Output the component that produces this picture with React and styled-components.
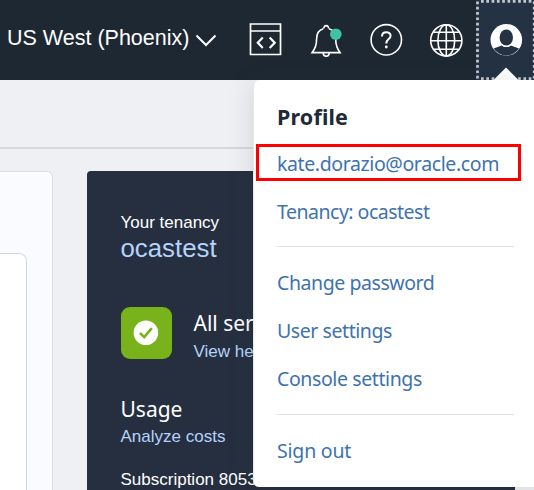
import React from "react";
import styled, { createGlobalStyle } from "styled-components";

const GlobalStyle = createGlobalStyle`
  * { box-sizing: border-box; }
  body { margin: 0; overflow: hidden; font-family: "Liberation Sans", Arial, sans-serif; }
`;

const Page = styled.div`
  position: relative;
  width: 534px;
  height: 490px;
  overflow: hidden;
  display: flex;
  flex-direction: column;
  background: #eff0f4;
`;

const TopBar = styled.header`
  display: flex;
  flex: 0 0 80px;
  width: 536px;
  background: #1e2833;
  color: #fff;
`;

const Region = styled.div`
  display: flex;
  align-items: center;
  width: 236px;
  padding: 0 0 4px 7px;
  font-size: 21.5px;
  white-space: nowrap;

  svg { margin: 6px 0 0 6px; }
`;

const IconButton = styled.div`
  display: flex;
  align-items: center;
  justify-content: center;
  width: 60px;
  height: 80px;
`;

const ProfileButton = styled(IconButton)`
  background: #243244;
  position: relative;
`;

const ProfileFrame = styled.svg`
  position: absolute;
  inset: 0;
`;

const Content = styled.main`
  flex: 1;
  display: flex;
  flex-direction: column;
  min-height: 0;
`;

const Toolbar = styled.div`
  height: 69px;
  flex: none;
  border-bottom: 2px solid #d3d8dc;
`;

const Columns = styled.div`
  display: flex;
  flex: 1;
  padding-top: 22px;
  gap: 34px;
`;

const MainCard = styled.section`
  width: 52.5px;
  height: 340px;
  padding-top: 81px;
  border: 1px solid #dadde2;
  border-left: 0;
  border-top-right-radius: 6px;
  background: #fafbff;
`;

const InnerCard = styled.div`
  width: 27px;
  height: 260px;
  border: 1px solid #d3d8df;
  border-left: 0;
  border-top-right-radius: 8px;
  background: #fff;
`;

const TenancyCard = styled.section`
  width: 428px;
  height: 340px;
  padding: 42px 0 0 34px;
  border-top-left-radius: 4px;
  background: #252f3f;
  color: #fff;
  white-space: nowrap;
`;

const Label = styled.div`
  font-size: 17px;
  line-height: 20px;
  color: ${(p) => (p.$link ? "#b5d3fa" : "#fff")};
`;

const TenancyName = styled.div`
  font-size: 25.8px;
  line-height: 30px;
  color: #b5d3fa;
`;

const Heading = styled.h3`
  margin: 0;
  font: 400 21px/28px "Noto Sans", sans-serif;
`;

const Status = styled.div`
  display: flex;
  gap: 22px;
  height: 52px;
  margin-top: 44px;
`;

const StatusTile = styled.div`
  display: flex;
  align-items: center;
  justify-content: center;
  width: 51px;
  height: 52px;
  border-radius: 9px;
  background: #78b31b;
`;

const StatusText = styled.div`
  padding-top: 2px;

  ${Label} { margin-top: 5px; }
`;

const Usage = styled.div`
  margin-top: 36px;

  ${Label} { margin-top: 4px; }
  ${Label} + ${Label} { margin-top: 23px; }
`;

const Menu = styled.nav`
  position: absolute;
  left: 253px;
  top: 80px;
  width: 300px;
  height: 407px;
  padding: 20px 39px 0 23px;
  border-left: 1px solid #e5e8eb;
  border-radius: 6px;
  background: #fff;
  box-shadow: -2px 2px 24px rgba(40, 60, 70, 0.13);
  font-family: "Noto Sans", sans-serif;
  white-space: nowrap;
`;

const MenuTitle = styled.h2`
  margin: 0 0 6px;
  font: 700 21.5px/34px "Noto Sans", sans-serif;
  letter-spacing: 0.15px;
  color: #1e2a38;
`;

const MenuLink = styled.a`
  display: block;
  height: 48px;
  font-size: 19.5px;
  line-height: 48px;
  color: #3e72b0;
  letter-spacing: ${(p) => p.$spacing || "-0.43px"};
`;

const Divider = styled.div`
  height: 1px;
  margin: ${(p) => p.$margin};
  background: #e1e1e1;
`;

const Highlight = styled.div`
  position: absolute;
  left: 256px;
  top: 144px;
  width: 265px;
  height: 37px;
  border: 3px solid #f00;
`;

function Chevron() {
  return (
    <svg width="22" height="14" viewBox="0 0 22 14" fill="none" stroke="#fff" strokeWidth="2">
      <path d="M1.5 1.5 11 11 20.5 1.5" />
    </svg>
  );
}

function CodeIcon() {
  return (
    <svg width="34" height="34" viewBox="0 0 34 34" fill="none" stroke="#fff" strokeWidth="1.7">
      <path d="M1.5 1H31.5V31.5H1.5ZM1.5 8H31.5" />
      <path d="M13.8 14.5 8.8 19.7 13.8 25M20.7 14.5 25.7 19.7 20.7 25" strokeWidth="2.2" />
    </svg>
  );
}

function BellIcon() {
  return (
    <svg width="34" height="36" viewBox="0 0 34 36" fill="none" stroke="#fff" strokeWidth="1.6">
      <path d="M14.3 6.8C9.3 8.2 7.6 12 7.6 17C7.6 23.5 6 27 3.2 30.6H31C28.3 27 26.7 23.5 26.7 17C26.7 12 25 8.2 20 6.8" />
      <path d="M15 6.6A2.3 2.3 0 1 1 19.4 6.6M14.2 31a3 3.2 0 0 0 6 0" />
      <circle cx="26.8" cy="12.2" r="5.8" fill="#3cc4a4" stroke="none" />
    </svg>
  );
}

function HelpIcon() {
  return (
    <svg width="34" height="34" viewBox="0 0 34 34" fill="none" stroke="#fff" strokeWidth="1.6">
      <circle cx="17.3" cy="16.8" r="15.2" />
      <path d="M13 13.4C13 7.8 21.6 8 21.6 12.8C21.6 16.2 17.3 16 17.3 20.5" strokeWidth="2" />
      <circle cx="17.3" cy="24" r="1.4" fill="#fff" stroke="none" />
    </svg>
  );
}

function GlobeIcon() {
  return (
    <svg width="34" height="34" viewBox="0 0 34 34" fill="none" stroke="#fff" strokeWidth="1.6">
      <circle cx="17.3" cy="17.4" r="15.6" />
      <ellipse cx="17.3" cy="17.4" rx="8.4" ry="15.6" />
      <path d="M17.3 1.8V33M1.7 17.7H32.9M4.8 9.2H29.8M4.8 26.3H29.8" />
    </svg>
  );
}

function UserIcon() {
  return (
    <svg width="34" height="34" viewBox="0 0 34 34">
      <circle cx="17.3" cy="16.8" r="15.8" fill="#fff" />
      <ellipse cx="17.3" cy="14.5" rx="6.7" ry="8" fill="#243244" />
      <path d="M4.6 25.5 12.8 22.4C15.3 24.6 19.3 24.6 21.8 22.4L30 25.5A15.1 15.1 0 0 1 4.6 25.5Z" fill="#243244" />
      <path d="M12.8 21.7C15.3 24.2 19.3 24.2 21.8 21.7" fill="none" stroke="#fff" strokeWidth=".9" />
    </svg>
  );
}

function CheckIcon() {
  return (
    <svg width="26" height="26" viewBox="0 0 26 26">
      <circle cx="12.9" cy="12.8" r="12.3" fill="#fff" />
      <path d="M7 13 11.2 17.1 18.8 8.2" fill="none" stroke="#78b31b" strokeWidth="2.6" />
    </svg>
  );
}

export default function App() {
  return (
    <Page>
      <GlobalStyle />
      <TopBar>
        <Region>US West (Phoenix)<Chevron /></Region>
        <IconButton><CodeIcon /></IconButton>
        <IconButton><BellIcon /></IconButton>
        <IconButton><HelpIcon /></IconButton>
        <IconButton><GlobeIcon /></IconButton>
        <ProfileButton>
          <ProfileFrame width="60" height="80" viewBox="0 0 60 80">
            <g fill="none" stroke="#c3c8ce" strokeWidth="2.7" strokeDasharray="2.7 2.6">
              <path d="M5 1.3H58M5 78.7H58M1.5 1.5V80M58.2 1.5V80" />
            </g>
            <path d="M17.5 80 30 67.5 42.5 80Z" fill="#fff" />
          </ProfileFrame>
          <UserIcon />
        </ProfileButton>
      </TopBar>
      <Content>
        <Toolbar />
        <Columns>
          <MainCard><InnerCard /></MainCard>
          <TenancyCard>
            <Label>Your tenancy</Label>
            <TenancyName>ocastest</TenancyName>
            <Status>
              <StatusTile><CheckIcon /></StatusTile>
              <StatusText>
                <Heading>All ser</Heading>
                <Label $link>View he</Label>
              </StatusText>
            </Status>
            <Usage>
              <Heading>Usage</Heading>
              <Label $link>Analyze costs</Label>
              <Label>Subscription 8053</Label>
            </Usage>
          </TenancyCard>
        </Columns>
      </Content>
      <Menu>
        <MenuTitle>Profile</MenuTitle>
        <MenuLink $spacing="-0.39px">kate.dorazio@oracle.com</MenuLink>
        <MenuLink $spacing="-0.5px">Tenancy: ocastest</MenuLink>
        <Divider $margin="10px 0 12px" />
        <MenuLink>Change password</MenuLink>
        <MenuLink>User settings</MenuLink>
        <MenuLink $spacing="-0.4px">Console settings</MenuLink>
        <Divider $margin="11px 0 12px" />
        <MenuLink $spacing="-0.2px">Sign out</MenuLink>
      </Menu>
      <Highlight />
    </Page>
  );
}
